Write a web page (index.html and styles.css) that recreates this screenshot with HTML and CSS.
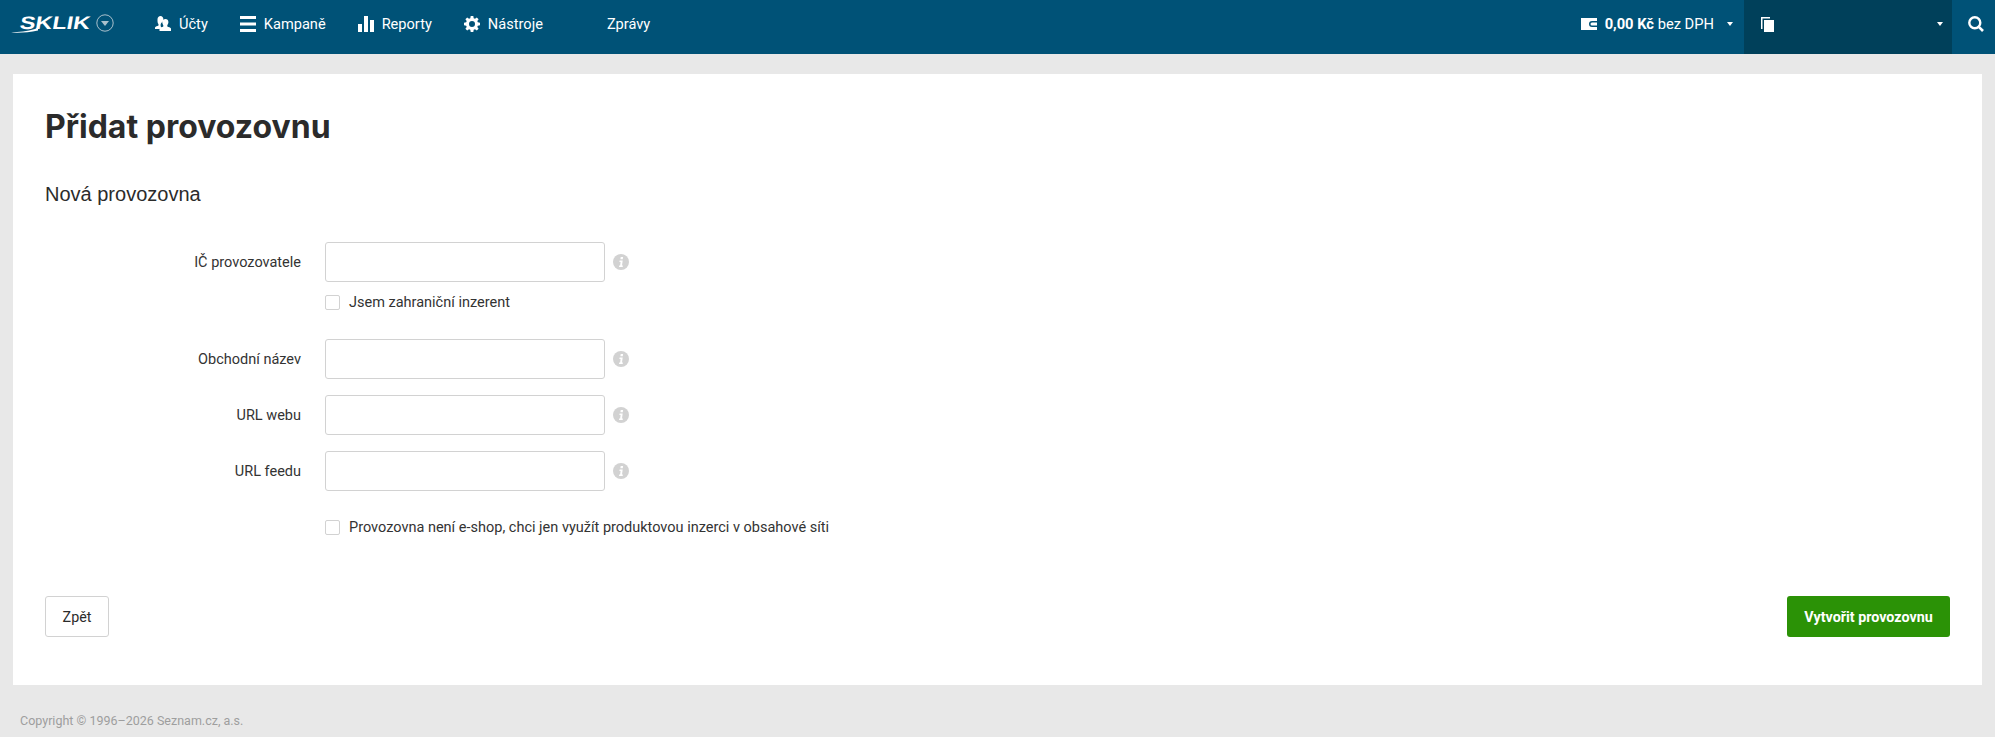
FILE: index.html
```html
<!DOCTYPE html>
<html lang="cs">
<head>
<meta charset="utf-8">
<title>Přidat provozovnu</title>
<link rel="stylesheet" href="styles.css">
</head>
<body>
<header class="topbar">
  <a class="logo">
    <span class="logo-word">SKLIK</span>
    <svg class="logo-swoosh" viewBox="0 0 30 6" width="30" height="6"><path d="M0 5.500C8 5 16 4.500 24 2L27 0.500L27 3.500C18 5.500 8 6 0 5.500Z" fill="#fff"/></svg>
    <svg class="logo-menu" viewBox="0 0 18 18" width="18" height="18"><circle cx="9" cy="9" r="8.200" fill="none" stroke="#a9c0cc" stroke-width="1"/><path d="M5 7h8l-4 5z" fill="#a9c0cc"/></svg>
  </a>
  <nav class="nav">
    <a class="nav-item"><svg class="icon" viewBox="0 0 16 16"><path d="M5.500 0C7.200 0 8.400 1.300 8.400 3.200c0 1-.3 2-.9 2.700-1.200.6-1.900 1.900-1.900 3.300 0 .9.300 1.700.8 2.400v.4L4.500 13H0v-1.600c.7-.8 2.200-1.200 3.500-1.800V8.300C2.900 7.500 2.500 6.400 2.500 5.200V3.200C2.500 1.300 3.800 0 5.500 0z" fill="#fff"/><path d="M10.500 3c1.700 0 2.900 1.300 2.900 3.100 0 1.200-.5 2.400-1.100 3.100v1.400c1.400.6 2.900 1 3.700 2V15H4.500v-2.400c.9-1 2.400-1.400 3.800-2V9.200C7.700 8.500 7.300 7.300 7.300 6.100 7.300 4.300 8.800 3 10.500 3z" fill="#fff"/></svg><span>Účty</span></a>
    <a class="nav-item"><svg class="icon" viewBox="0 0 16 16"><path d="M0 0h16v3H0zM0 6.500h16v3H0zM0 13h16v3H0z" fill="#fff"/></svg><span>Kampaně</span></a>
    <a class="nav-item"><svg class="icon" viewBox="0 0 16 16"><path d="M0 8h4v8H0zM6 0h4v16H6zM12 4h4v12h-4z" fill="#fff"/></svg><span>Reporty</span></a>
    <a class="nav-item"><svg class="icon" viewBox="0 0 16 16"><path fill="#fff" fill-rule="evenodd" d="M6.700 0h2.600l.4 2.200 1.300.5 1.800-1.300 1.800 1.800-1.300 1.800.5 1.300 2.200.4v2.600l-2.200.4-.5 1.300 1.300 1.800-1.800 1.800-1.800-1.300-1.300.5-.4 2.200H6.700l-.4-2.200-1.300-.5-1.800 1.300-1.800-1.800 1.300-1.800-.5-1.300L0 9.300V6.700l2.200-.4.5-1.300-1.300-1.800 1.800-1.800L5 2.700l1.300-.5zM8 5a3 3 0 1 0 0 6 3 3 0 0 0 0-6z"/></svg><span>Nástroje</span></a>
    <a class="nav-item nav-item-wide"><span class="icon"></span><span>Zprávy</span></a>
  </nav>
  <div class="top-right">
    <a class="credit">
      <svg class="icon" viewBox="0 0 16 12" width="16" height="12"><path fill="#fff" fill-rule="evenodd" d="M0 0h16v3h-5a3 3 0 0 0 0 6h5v3H0zM11 4.500h5v3h-5a1.500 1.500 0 0 1 0-3z"/></svg>
      <span class="credit-text"><b>0,00 Kč</b> bez DPH</span>
      <i class="caret"></i>
    </a>
    <div class="account">
      <svg class="copy" viewBox="0 0 13 15" width="13" height="15"><path d="M0 0h9v1.500H1.500V12H0z" fill="#fff"/><path d="M3 3h10v12H3z" fill="#fff"/></svg>
      <i class="caret"></i>
    </div>
    <a class="search"><svg viewBox="0 0 16 16" width="16" height="16"><circle cx="6.800" cy="6.800" r="5.500" fill="none" stroke="#fff" stroke-width="2.400"/><path d="M10.800 10.800L15 15" stroke="#fff" stroke-width="2.600"/></svg></a>
  </div>
</header>

<main class="card">
  <h1 class="title">Přidat provozovnu</h1>
  <h2 class="subtitle">Nová provozovna</h2>
  <form class="form">
    <div class="row">
      <label class="label">IČ provozovatele</label>
      <input class="input" type="text">
      <svg class="info" viewBox="0 0 16 16" width="16" height="16"><circle cx="8" cy="8" r="8" fill="#d2d2d2"/><path d="M7.700 3h2.400l-.3 2.200H7.400zM6.600 6.500h3.100l-.7 5h.9l-.2 1.500H6l.2-1.500h.9L7.600 8h-1.200z" fill="#fff"/></svg>
    </div>
    <div class="check-row check-row-first">
      <span class="checkbox"></span><span>Jsem zahraniční inzerent</span>
    </div>
    <div class="row row-second">
      <label class="label">Obchodní název</label>
      <input class="input" type="text">
      <svg class="info" viewBox="0 0 16 16" width="16" height="16"><circle cx="8" cy="8" r="8" fill="#d2d2d2"/><path d="M7.700 3h2.400l-.3 2.200H7.400zM6.600 6.500h3.100l-.7 5h.9l-.2 1.500H6l.2-1.500h.9L7.600 8h-1.200z" fill="#fff"/></svg>
    </div>
    <div class="row">
      <label class="label">URL webu</label>
      <input class="input" type="text">
      <svg class="info" viewBox="0 0 16 16" width="16" height="16"><circle cx="8" cy="8" r="8" fill="#d2d2d2"/><path d="M7.700 3h2.400l-.3 2.200H7.400zM6.600 6.500h3.100l-.7 5h.9l-.2 1.500H6l.2-1.500h.9L7.600 8h-1.200z" fill="#fff"/></svg>
    </div>
    <div class="row">
      <label class="label">URL feedu</label>
      <input class="input" type="text">
      <svg class="info" viewBox="0 0 16 16" width="16" height="16"><circle cx="8" cy="8" r="8" fill="#d2d2d2"/><path d="M7.700 3h2.400l-.3 2.200H7.400zM6.600 6.500h3.100l-.7 5h.9l-.2 1.500H6l.2-1.500h.9L7.600 8h-1.200z" fill="#fff"/></svg>
    </div>
    <div class="check-row check-row-last">
      <span class="checkbox"></span><span>Provozovna není e-shop, chci jen využít produktovou inzerci v obsahové síti</span>
    </div>
    <div class="actions">
      <button class="btn btn-back" type="button">Zpět</button>
      <button class="btn btn-primary" type="button">Vytvořit provozovnu</button>
    </div>
  </form>
</main>
<footer class="footer">Copyright © 1996–2026 Seznam.cz, a.s.</footer>
</body>
</html>
```
FILE: styles.css
```css
* { box-sizing: border-box; }
html, body { margin: 0; padding: 0; }
body {
  background: #e8e8e8;
  color: #333;
  font-family: Roboto, "Liberation Sans", sans-serif;
  font-size: 14.500px;
  height: 737px;
  overflow: hidden;
}
.topbar {
  height: 54px;
  background: #005277;
  color: #fff;
  display: flex;
  align-items: center;
}
.logo {
  position: relative;
  width: 155px;
  height: 54px;
  flex: none;
  display: block;
}
.logo-word {
  position: absolute;
  left: 20px;
  top: 11px;
  font-family: "Liberation Sans", sans-serif;
  font-weight: 700;
  font-size: 18px;
  line-height: 24px;
  color: #fff;
  transform: skewX(-10deg) scaleX(1.3);
  transform-origin: left center;
}
.logo-swoosh { position: absolute; left: 11px; top: 27px; }
.logo-menu { position: absolute; left: 96px; top: 14px; }
.nav { display: flex; align-items: center; gap: 32px; padding-bottom: 6px; }
.nav-item { display: flex; align-items: center; gap: 8px; font-size: 14.600px; color: #fff; }
.nav-item-wide { margin-left: 8px; }
.icon { width: 16px; height: 16px; display: block; flex: none; }
.top-right { margin-left: auto; display: flex; align-items: stretch; height: 54px; }
.credit { display: flex; align-items: center; font-size: 14.700px; padding: 0 11px 6px 0; }
.credit .icon { height: 12px; }
.credit-text { margin-left: 8px; }
.credit-text b { font-weight: 700; }
.caret {
  display: block;
  width: 0;
  height: 0;
  border-left: 3.500px solid transparent;
  border-right: 3.500px solid transparent;
  border-top: 4px solid #fff;
}
.credit .caret { margin-left: 13px; }
.account {
  width: 208px;
  background: #00405a;
  display: flex;
  align-items: center;
  justify-content: space-between;
  padding: 0 9px 6px 17px;
}
.search { width: 43px; display: flex; align-items: center; padding: 0 0 6px 16px; }
.card {
  background: #fff;
  margin: 20px 13px 0;
  height: 611px;
  padding: 0 32px;
}
.title {
  margin: 0;
  padding-top: 33px;
  font-family: Inter, Roboto, sans-serif;
  font-size: 32px;
  line-height: 40px;
  font-weight: 700;
  color: #2b2b2b;
}
.subtitle {
  margin: 0;
  padding-top: 35px;
  font-family: "Liberation Sans", sans-serif;
  font-size: 20px;
  line-height: 24px;
  font-weight: 400;
  color: #2b2b2b;
}
.form { margin-top: 36px; }
.row { display: flex; align-items: center; height: 40px; margin-bottom: 16px; }
.label { width: 256px; text-align: right; flex: none; }
.input {
  width: 280px;
  height: 40px;
  margin-left: 24px;
  border: 1px solid #d2d2d2;
  border-radius: 3px;
  background: #fff;
  padding: 0 8px;
  flex: none;
}
.info { margin-left: 8px; display: block; flex: none; }
.check-row { display: flex; align-items: center; gap: 9px; margin-left: 280px; height: 16px; }
.check-row-first { margin-top: -4px; margin-bottom: 29px; }
.check-row-last { margin-top: 28px; }
.checkbox { width: 15px; height: 15px; border: 1px solid #d2d2d2; border-radius: 2px; background: #fff; flex: none; display: block; }
.actions { display: flex; justify-content: space-between; margin-top: 61px; }
.btn { height: 41px; border-radius: 3px; font-family: inherit; font-size: 14.300px; padding: 0; cursor: pointer; }
.btn-back { width: 64px; background: #fff; border: 1px solid #d2d2d2; color: #2b2b2b; }
.btn-primary { width: 163px; background: #2b9206; border: 0; color: #fff; font-weight: 700; }
.footer { margin: 28px 0 0 20px; font-size: 12.500px; color: #9e9e9e; line-height: 16px; }
```
